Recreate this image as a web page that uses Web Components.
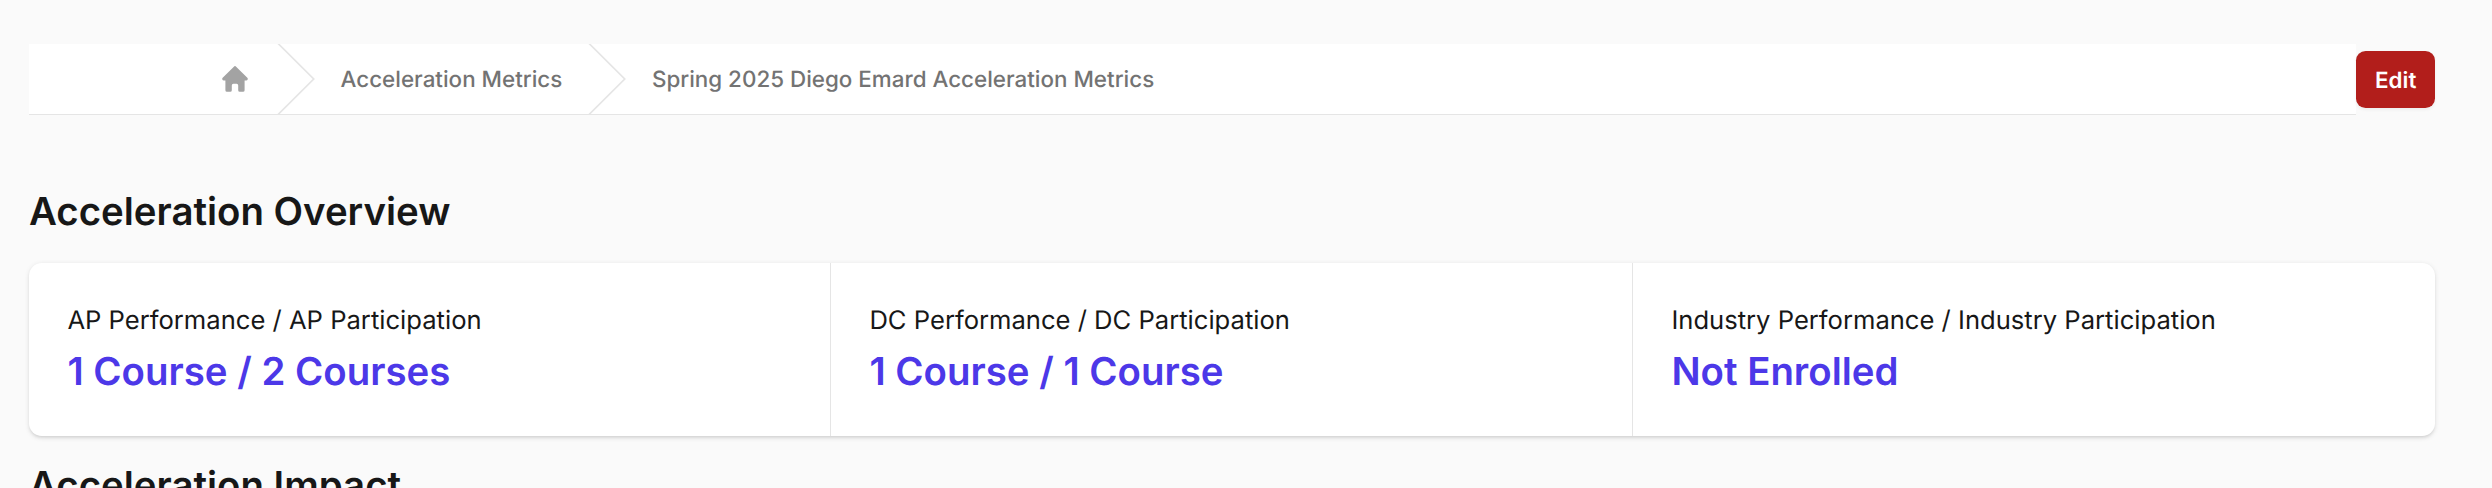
<!DOCTYPE html>
<html lang="en">
<head>
<meta charset="utf-8">
<title>Acceleration Metrics</title>
<style>
  html, body { margin: 0; background: #fafafa; }
  body {
    font-family: Inter, "Liberation Sans", sans-serif;
    color: #171717;
    text-rendering: geometricPrecision;
  }
</style>
</head>
<body>
<metrics-page>
  <page-header>
    <bread-crumbs>
      <crumb-item home></crumb-item>
      <crumb-item>Acceleration Metrics</crumb-item>
      <crumb-item>Spring 2025 Diego Emard Acceleration Metrics</crumb-item>
    </bread-crumbs>
    <edit-button>Edit</edit-button>
  </page-header>
  <section-title>Acceleration Overview</section-title>
  <metric-card>
    <metric-cell label="AP Performance / AP Participation">1 Course / 2 Courses</metric-cell>
    <metric-cell label="DC Performance / DC Participation">1 Course / 1 Course</metric-cell>
    <metric-cell label="Industry Performance / Industry Participation">Not Enrolled</metric-cell>
  </metric-card>
  <section-title>Acceleration Impact</section-title>
</metrics-page>

<script>
  class MetricsPage extends HTMLElement {
    constructor() {
      super();
      this.attachShadow({ mode: 'open' }).innerHTML = `
        <style>
          :host { display: block; padding: 44px 57px 0 29px; }
        </style>
        <slot></slot>
      `;
    }
  }

  class PageHeader extends HTMLElement {
    constructor() {
      super();
      this.attachShadow({ mode: 'open' }).innerHTML = `
        <style>
          :host { display: flex; align-items: center; margin-bottom: 71px; }
        </style>
        <slot></slot>
      `;
    }
  }

  class BreadCrumbs extends HTMLElement {
    constructor() {
      super();
      this.attachShadow({ mode: 'open' }).innerHTML = `
        <style>
          :host {
            display: flex;
            flex: 1;
            gap: 25.6px;
            height: 70px;
            padding-left: 190px;
            background: #fff;
            border-bottom: 1.6px solid #e5e5e5;
          }
        </style>
        <slot></slot>
      `;
    }
  }

  class CrumbItem extends HTMLElement {
    constructor() {
      super();
      const home = this.hasAttribute('home');
      this.attachShadow({ mode: 'open' }).innerHTML = `
        <style>
          :host { display: flex; align-items: center; gap: 25.6px; }
          .label { padding-top: 2px; font-size: 22.4px; font-weight: 500; color: #737373; line-height: 32px; }
          .sep { width: 38.4px; height: 70px; flex: none; color: #e5e5e5; }
          .home { width: 32px; height: 32px; flex: none; color: #a3a3a3; }
        </style>
        ${home
          ? `<svg class="home" viewBox="0 0 20 20" fill="currentColor"><path d="M9.293 2.293a1 1 0 011.414 0l7 7A1 1 0 0117 11h-1v6a1 1 0 01-1 1h-2a1 1 0 01-1-1v-3a1 1 0 00-1-1H9a1 1 0 00-1 1v3a1 1 0 01-1 1H5a1 1 0 01-1-1v-6H3a1 1 0 01-.707-1.707l7-7z"/></svg>`
          : `<svg class="sep" viewBox="0 0 24 44" preserveAspectRatio="none" fill="currentColor"><path d="M.293 0l22 22-22 22h1.414l22-22-22-22H.293z"/></svg>
             <span class="label"><slot></slot></span>`}
      `;
    }
  }

  class EditButton extends HTMLElement {
    constructor() {
      super();
      this.attachShadow({ mode: 'open' }).innerHTML = `
        <style>
          :host {
            display: block;
            flex: none;
            padding: 13.8px 18.7px 11.8px;
            font-size: 22.4px;
            font-weight: 600;
            line-height: 32px;
            color: #fff;
            background: #b21e1b;
            border-radius: 9.6px;
            box-shadow: 0 1.6px 3.2px rgba(0, 0, 0, .05);
          }
        </style>
        <slot></slot>
      `;
    }
  }

  class SectionTitle extends HTMLElement {
    constructor() {
      super();
      this.attachShadow({ mode: 'open' }).innerHTML = `
        <style>
          :host {
            display: block;
            padding-top: 1px;
            margin-bottom: 24.6px;
            font-size: 38.4px;
            font-weight: 600;
            line-height: 51.2px;
            color: #171717;
          }
        </style>
        <slot></slot>
      `;
    }
  }

  class MetricCard extends HTMLElement {
    constructor() {
      super();
      this.attachShadow({ mode: 'open' }).innerHTML = `
        <style>
          :host {
            display: grid;
            grid-template-columns: repeat(3, 1fr);
            margin-bottom: 24.6px;
            background: #fff;
            border-radius: 12.8px;
            box-shadow: 0 1.6px 4.8px rgba(0, 0, 0, .1), 0 1.6px 3.2px -1.6px rgba(0, 0, 0, .1);
          }
          ::slotted(:not(:last-child)) { border-right: 1.6px solid #e5e5e5; }
        </style>
        <slot></slot>
      `;
    }
  }

  class MetricCell extends HTMLElement {
    constructor() {
      super();
      this.attachShadow({ mode: 'open' }).innerHTML = `
        <style>
          :host { display: block; padding: 39.4px 38.4px 37.4px; min-width: 0; }
          .label { font-size: 25.6px; line-height: 38.4px; color: #171717; }
          .value { margin-top: 6.4px; font-size: 38.4px; font-weight: 600; line-height: 51.2px; color: #4c38e8; }
        </style>
        <div class="label">${this.getAttribute('label')}</div>
        <div class="value"><slot></slot></div>
      `;
    }
  }

  customElements.define('metrics-page', MetricsPage);
  customElements.define('page-header', PageHeader);
  customElements.define('bread-crumbs', BreadCrumbs);
  customElements.define('crumb-item', CrumbItem);
  customElements.define('edit-button', EditButton);
  customElements.define('section-title', SectionTitle);
  customElements.define('metric-card', MetricCard);
  customElements.define('metric-cell', MetricCell);
</script>
</body>
</html>
